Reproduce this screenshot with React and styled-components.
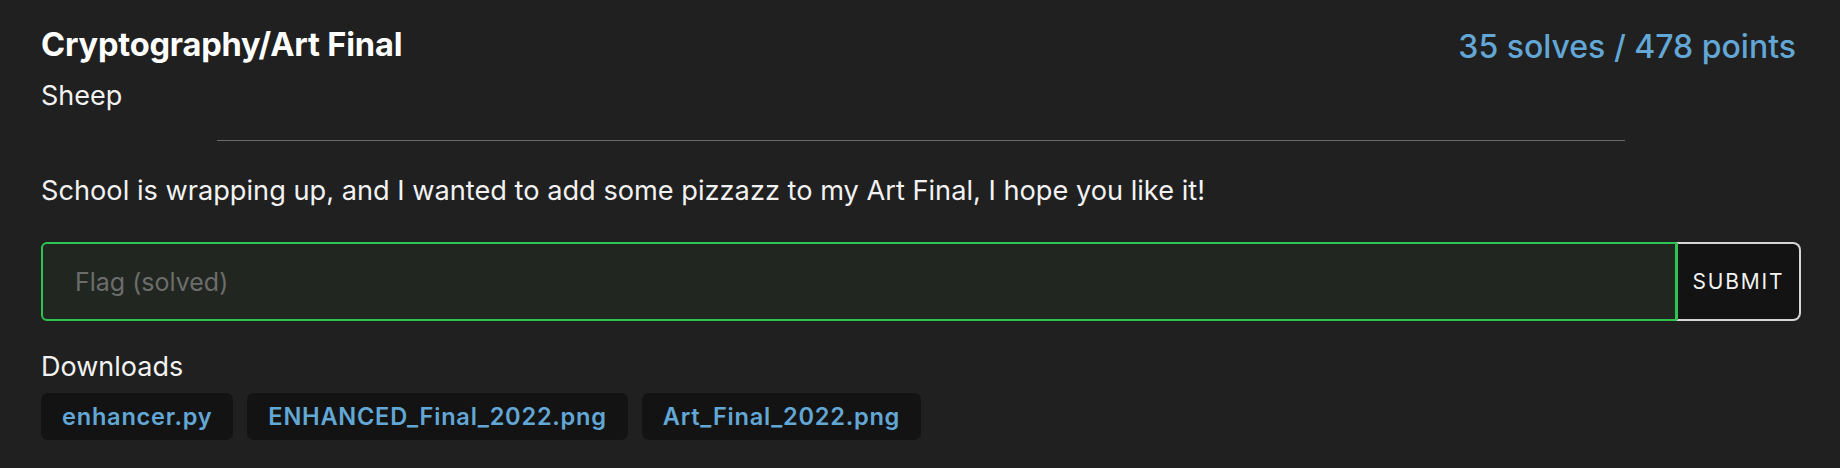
import React from "react";
import styled, { createGlobalStyle } from "styled-components";

const GlobalStyle = createGlobalStyle`
  html, body {
    margin: 0;
    padding: 0;
    background: #202020;
  }
  body {
    font-family: Inter, "Noto Sans", "Liberation Sans", sans-serif;
    color: #f2f2f2;
  }
  * {
    box-sizing: border-box;
  }
`;

const files = ["enhancer.py", "ENHANCED_Final_2022.png", "Art_Final_2022.png"];

const App = () => {
  return (
    <>
      <GlobalStyle />
      <Challenge>
        <Header>
          <Title>Cryptography/Art Final</Title>
          <Score>35 solves / 478 points</Score>
        </Header>
        <Author>Sheep</Author>
        <Divider />
        <Description>
          School is wrapping up, and I wanted to add some pizzazz to my Art
          Final, I hope you like it!
        </Description>
        <FlagForm onSubmit={(e) => e.preventDefault()}>
          <FlagInput placeholder="Flag (solved)" solved />
          <SubmitButton type="submit">Submit</SubmitButton>
        </FlagForm>
        <Downloads>
          <DownloadsLabel>Downloads</DownloadsLabel>
          <FileList>
            {files.map((f) => (
              <FileChip key={f} href="#">
                {f}
              </FileChip>
            ))}
          </FileList>
        </Downloads>
      </Challenge>
    </>
  );
};

const Challenge = styled.div`
  padding: 25px 39px 0 41px;
  display: flex;
  flex-direction: column;
`;

const Header = styled.div`
  display: flex;
  justify-content: space-between;
  align-items: flex-start;
`;

const Title = styled.h2`
  margin: 0;
  font-size: 32.6px;
  line-height: 38px;
  font-weight: 700;
  color: #fff;
  letter-spacing: -0.2px;
`;

const Score = styled.div`
  margin: 3px 5px 0 0;
  font-size: 32px;
  line-height: 38px;
  font-weight: 500;
  color: #62a7d5;
`;

const Author = styled.div`
  margin-top: 14px;
  font-size: 27px;
  line-height: 32px;
  color: #f2f2f2;
`;

const Divider = styled.hr`
  width: 80%;
  margin: 28px auto 0;
  border: none;
  border-top: 1px solid #6a6a6a;
`;

const Description = styled.p`
  margin: 33px 0 0;
  font-size: 27.2px;
  line-height: 34px;
  color: #f2f2f2;
`;

const FlagForm = styled.form`
  margin-top: 34px;
  display: flex;
  height: 79px;
`;

const FlagInput = styled.input`
  flex: 1;
  min-width: 0;
  height: 100%;
  padding: 0 32px;
  background: ${(p) => (p.solved ? "#212621" : "#1a1a1a")};
  border: 2px solid ${(p) => (p.solved ? "#2fc452" : "#555")};
  border-radius: 6px 0 0 6px;
  font-family: inherit;
  font-size: 25px;
  color: #f2f2f2;
  outline: none;
  &::placeholder {
    color: #6b6d6b;
  }
`;

const SubmitButton = styled.button`
  width: 125px;
  height: 100%;
  margin-left: -1px;
  padding: 0;
  background: #131313;
  border: 2px solid #d6d6d6;
  border-left-color: #2fc452;
  border-radius: 0 8px 8px 0;
  font-family: inherit;
  font-size: 21px;
  letter-spacing: 1.8px;
  text-transform: uppercase;
  color: #f2f2f2;
  cursor: pointer;
`;

const Downloads = styled.div`
  margin-top: 30px;
`;

const DownloadsLabel = styled.div`
  font-size: 27px;
  line-height: 32px;
  color: #f2f2f2;
`;

const FileList = styled.div`
  margin-top: 10px;
  display: flex;
  gap: 14px;
`;

const FileChip = styled.a`
  display: flex;
  align-items: center;
  height: 47px;
  padding: 0 21px;
  background: #131313;
  border-radius: 7px;
  font-size: 23.6px;
  font-weight: 600;
  color: #62a7d5;
  text-decoration: none;
  letter-spacing: 0.75px;
`;

export default App;
